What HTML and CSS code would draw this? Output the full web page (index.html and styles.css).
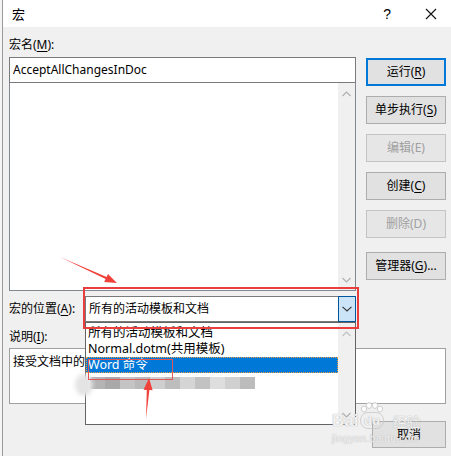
FILE: index.html
```html
<!DOCTYPE html>
<html>
<head>
<meta charset="utf-8">
<title>宏</title>
<link rel="stylesheet" href="styles.css">
</head>
<body>
<div class="window">
  <div class="titlebar">
    <span class="title">宏</span>
    <span class="help">?</span>
    <svg class="close" width="12" height="12" viewBox="0 0 12 12"><path d="M1 1 L11 11 M11 1 L1 11" stroke="#111" stroke-width="1.1" fill="none"/></svg>
  </div>
  <div class="content">
    <div class="label">宏名(<u>M</u>):</div>
    <div class="upper">
      <div class="leftcol">
        <div class="input">AcceptAllChangesInDoc</div>
        <div class="list">
          <div class="list-body"></div>
          <div class="vscroll">
            <svg class="chev" width="9" height="6" viewBox="0 0 9 6"><polyline points="0.5,5 4.5,1 8.5,5" stroke="#b0b0b0" stroke-width="1.2" fill="none"/></svg>
            <svg class="chev" width="9" height="6" viewBox="0 0 9 6"><polyline points="0.5,1 4.5,5 8.5,1" stroke="#b0b0b0" stroke-width="1.2" fill="none"/></svg>
          </div>
        </div>
      </div>
      <div class="buttons">
        <div class="btn default">运行(<u>R</u>)</div>
        <div class="btn">单步执行(<u>S</u>)</div>
        <div class="btn disabled">编辑(E)</div>
        <div class="btn">创建(<u>C</u>)</div>
        <div class="btn disabled">删除(D)</div>
        <div class="btn manager">管理器(<u>G</u>)...</div>
      </div>
    </div>
    <div class="location-row">
      <div class="label loc-label">宏的位置(<u>A</u>):</div>
      <div class="combo">
        <span class="combo-text">所有的活动模板和文档</span>
        <div class="combo-btn">
          <svg width="10" height="6" viewBox="0 0 10 6"><polyline points="0.5,0.8 5,5 9.5,0.8" stroke="#333" stroke-width="1.1" fill="none"/></svg>
        </div>
      </div>
    </div>
    <div class="label desc-label">说明(<u>I</u>):</div>
    <div class="desc">接受文档中的</div>
    <div class="footer"><div class="btn cancel">取消</div></div>
  </div>

  <div class="dropdown">
    <div class="dd-items">
      <div class="dd-item">所有的活动模板和文档</div>
      <div class="dd-item">Normal.dotm(共用模板)</div>
      <div class="dd-item selected">Word 命令</div>
      <div class="dd-blur">
        <span class="m" style="background:#b4b4b4"></span>
        <span class="m" style="background:#a9a9a9"></span>
        <span class="m" style="background:#c4c4c4"></span>
        <span class="m" style="background:#b9b9b9"></span>
        <span class="m" style="background:#cfcfcf"></span>
        <span class="m" style="background:#bdbdbd"></span>
        <span class="m" style="background:#d5d5d5"></span>
        <span class="m" style="background:#c2c2c2"></span>
        <span class="m" style="background:#dedede"></span>
        <span class="m" style="background:#d0d0d0"></span>
        <span class="m" style="background:#bcbcbc"></span>
      </div>
    </div>
    <div class="dd-scroll">
      <svg class="chev" width="9" height="6" viewBox="0 0 9 6"><polyline points="0.5,5 4.5,1 8.5,5" stroke="#c0c0c0" stroke-width="1.2" fill="none"/></svg>
      <svg class="chev" width="9" height="6" viewBox="0 0 9 6"><polyline points="0.5,1 4.5,5 8.5,1" stroke="#b0b0b0" stroke-width="1.2" fill="none"/></svg>
    </div>
  </div>

  <div class="blob"></div>
  <div class="redbox r1"></div>
  <div class="redbox r2"></div>
  <svg class="annot" width="451" height="456" viewBox="0 0 451 456">
    <polygon points="60,257 106.6,276.9 108,273.9 117,283 104.2,282.1 105.6,279.1" fill="#f0413a"/>
    <polygon points="146,419 149.4,390.1 152.6,390.3 149,378 143.6,389.7 146.8,389.9" fill="#f0413a"/>
  </svg>
  <div class="watermark">
    <div class="wm-main">
      <span class="wm-bai">Bai</span>
      <span class="wm-du">
        <svg class="toes" width="24" height="11" viewBox="0 0 24 11">
          <g fill="rgba(255,255,255,0.85)" stroke="#cfcfcf" stroke-width="1">
            <ellipse cx="4" cy="7" rx="2.6" ry="3"/>
            <ellipse cx="9" cy="3.5" rx="2.6" ry="3"/>
            <ellipse cx="15" cy="3.5" rx="2.6" ry="3"/>
            <ellipse cx="20" cy="7" rx="2.6" ry="3"/>
          </g>
        </svg>
        <span class="du">du</span>
      </span>
      <span class="wm-cn">经验</span>
    </div>
    <div class="wm-url">jingyan.baidu.com</div>
  </div>
</div>
</body>
</html>
```
FILE: styles.css
```css
* { box-sizing: border-box; margin: 0; padding: 0; }
html, body { width: 451px; height: 456px; overflow: hidden; }
body {
  background: #f4f4f4;
  font-family: "Noto Sans", "Noto Sans CJK SC", sans-serif;
  font-size: 12px;
  color: #000;
}
u { text-decoration: underline; text-underline-offset: 2px; }

.window {
  position: relative;
  margin-left: 2px;
  width: 449px;
  height: 456px;
  border-left: 1px solid #9a9a9a;
  background: #f0f0f0;
}

.titlebar {
  height: 27px;
  background: #fff;
  display: flex;
  align-items: center;
  padding-left: 9px;
}
.title { font-size: 13px; line-height: 16px; flex: 1; }
.help { font-size: 14px; line-height: 16px; margin-right: 34px; font-family: "Liberation Sans", sans-serif; }
.close { margin-right: 14px; }

.content { padding: 10px 5px 0 6px; }
.label { line-height: 16px; height: 16px; white-space: nowrap; }
.content > .label:first-child { margin-bottom: 4px; }

.upper {
  display: grid;
  grid-template-columns: 347px 80px;
  column-gap: 10px;
}
.input {
  height: 26px;
  border: 1px solid #7a7a7a;
  background: #fff;
  padding-left: 3px;
  line-height: 24px;
}
.list {
  height: 208px;
  border: 1px solid #828790;
  border-top: none;
  display: flex;
}
.list-body { flex: 1; background: #fff; }
.vscroll {
  width: 17px;
  background: #f0f0f0;
  display: flex;
  flex-direction: column;
  justify-content: space-between;
  align-items: center;
  padding: 8px 0 7px;
}
.chev { display: block; }

.buttons {
  display: flex;
  flex-direction: column;
  gap: 10px;
  padding-top: 1px;
}
.btn {
  height: 28px;
  background: #e1e1e1;
  border: 1px solid #adadad;
  text-align: center;
  line-height: 26px;
  white-space: nowrap;
}
.btn.default { border: 2px solid #0078d7; line-height: 24px; }
.btn.disabled { color: #a0a0a0; background: #e6e6e6; border-color: #c4c4c4; }
.btn.manager { margin-top: 4px; }

.location-row {
  margin-top: 5px;
  display: flex;
  align-items: center;
  height: 26px;
}
.loc-label { width: 76px; }
.combo {
  width: 271px;
  height: 26px;
  border: 1px solid #7a7a7a;
  background: #fff;
  display: flex;
}
.combo-text { flex: 1; padding-left: 3px; line-height: 24px; }
.combo-btn {
  width: 18px;
  margin: -1px -1px -1px 0;
  background: #cce4f7;
  border: 1px solid #005499;
  display: flex;
  align-items: center;
  justify-content: center;
}

.desc-label { margin-top: 7px; }
.desc {
  margin-top: 3px;
  height: 56px;
  background: #fff;
  border: 1px solid #a0a0a0;
  padding: 4px 3px;
  line-height: 18px;
}
.footer { display: flex; justify-content: flex-end; margin-top: 17px; }
.btn.cancel { width: 74px; height: 27px; line-height: 25px; }

.dropdown {
  position: absolute;
  left: 82px;
  top: 322px;
  width: 271px;
  height: 103px;
  background: #fff;
  border: 1px solid #646464;
  display: flex;
}
.dd-items { flex: 1; padding-top: 2px; }
.dd-item { line-height: 16px; height: 16px; padding-left: 2px; white-space: nowrap; font-size: 12.5px; }
.dd-item.selected {
  background: #0078d7;
  color: #fff;
  outline: 1px dotted #e8a040;
  outline-offset: -1px;
}
.dd-blur { display: flex; margin: 4px 0 0 4px; height: 12px; }
.dd-blur .m { width: 15px; height: 12px; display: block; }
.dd-scroll {
  width: 17px;
  background: #f0f0f0;
  display: flex;
  flex-direction: column;
  justify-content: space-between;
  align-items: center;
  padding: 8px 0 6px;
}

.blob {
  position: absolute;
  left: 72px;
  top: 374px;
  width: 18px;
  height: 22px;
  border-radius: 50%;
  background: #e4e4e4;
  filter: blur(2px);
}
.redbox { position: absolute; border: 2px solid #ea3d3d; }
.r1 { left: 80px; top: 287px; width: 276px; height: 42px; }
.r2 { left: 85px; top: 359px; width: 85px; height: 21px; border-width: 1.5px; border-color: #e05555; }
.annot { position: absolute; left: -3px; top: 0; pointer-events: none; }

.watermark {
  position: absolute;
  left: 329px;
  top: 401px;
  color: rgba(255, 255, 255, 0.8);
  text-shadow: 0 0 1px #bdbdbd, 0 0 1px #bdbdbd;
  font-family: "Liberation Sans", "Noto Sans CJK SC", sans-serif;
  pointer-events: none;
}
.wm-main { display: flex; align-items: flex-end; white-space: nowrap; height: 28px; }
.wm-bai { font-size: 17px; font-weight: bold; line-height: 17px; }
.wm-du {
  display: flex;
  flex-direction: column;
  align-items: center;
  width: 25px;
  margin-left: 1px;
}
.toes { display: block; margin-bottom: -1px; }
.du {
  font-size: 13px;
  font-weight: bold;
  line-height: 15px;
  padding: 0 3px;
  border: 1.5px solid rgba(200, 200, 200, 0.8);
  border-radius: 8px;
}
.wm-cn { font-size: 14px; line-height: 16px; margin-left: 8px; font-family: "Noto Sans CJK SC", sans-serif; }
.wm-url { font-size: 10px; line-height: 12px; margin-top: 4px; letter-spacing: 0.4px; white-space: nowrap; }
```
